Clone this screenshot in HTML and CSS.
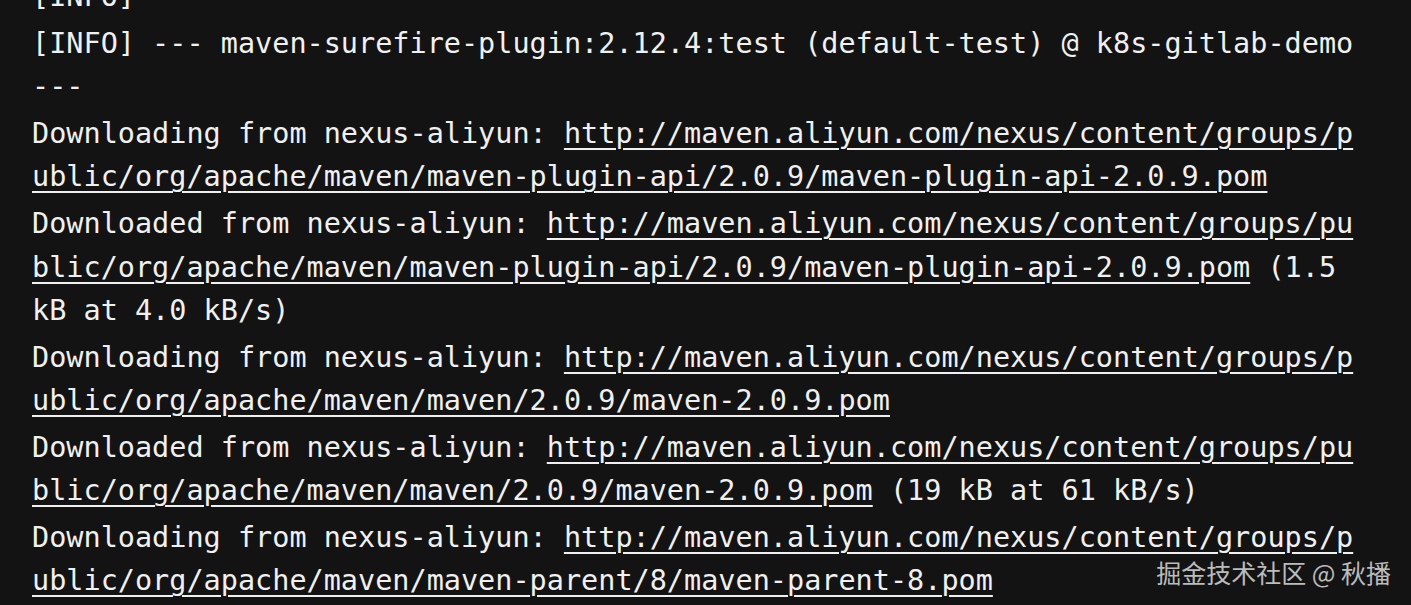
FILE: index.html
```html
<!DOCTYPE html>
<html lang="en">
<head>
<meta charset="utf-8">
<title>maven log</title>
<link rel="stylesheet" href="styles.css">
</head>
<body>
<main class="terminal">
  <div class="log">
    <p class="line">[INFO]</p>
    <p class="line">[INFO] --- maven-surefire-plugin:2.12.4:test (default-test) @ k8s-gitlab-demo ---</p>
    <p class="line">Downloading from nexus-aliyun: <a class="url" href="#">http://maven.aliyun.com/nexus/content/groups/public/org/apache/maven/maven-plugin-api/2.0.9/maven-plugin-api-2.0.9.pom</a></p>
    <p class="line">Downloaded from nexus-aliyun: <a class="url" href="#">http://maven.aliyun.com/nexus/content/groups/public/org/apache/maven/maven-plugin-api/2.0.9/maven-plugin-api-2.0.9.pom</a> (1.5 kB at 4.0 kB/s)</p>
    <p class="line">Downloading from nexus-aliyun: <a class="url" href="#">http://maven.aliyun.com/nexus/content/groups/public/org/apache/maven/maven/2.0.9/maven-2.0.9.pom</a></p>
    <p class="line">Downloaded from nexus-aliyun: <a class="url" href="#">http://maven.aliyun.com/nexus/content/groups/public/org/apache/maven/maven/2.0.9/maven-2.0.9.pom</a> (19 kB at 61 kB/s)</p>
    <p class="line">Downloading from nexus-aliyun: <a class="url" href="#">http://maven.aliyun.com/nexus/content/groups/public/org/apache/maven/maven-parent/8/maven-parent-8.pom</a></p>
  </div>
  <div class="watermark">掘金技术社区 @ 秋播</div>
</main>
</body>
</html>
```
FILE: styles.css
```css
html, body {
  margin: 0;
  padding: 0;
  background: #131313;
  height: 100%;
  overflow: hidden;
}

.terminal {
  position: relative;
  height: 605px;
  overflow: hidden;
  background: #131313;
}

.log {
  margin-top: -25px;
  padding-left: 32px;
  font-family: "DejaVu Sans Mono", "Liberation Mono", monospace;
  font-size: 28.5px;
  line-height: 43.3px;
  color: #f0f0f0;
  width: 77.5ch;
  display: flex;
  flex-direction: column;
  gap: 3.6px;
}

.line {
  margin: 0;
  white-space: normal;
}

.url {
  color: #f0f0f0;
  word-break: break-all;
  text-decoration: underline;
  text-decoration-thickness: 2px;
  text-underline-offset: 5px;
}

.watermark {
  position: absolute;
  right: 20px;
  bottom: 18px;
  font-family: "Noto Sans CJK SC", "Noto Sans", sans-serif;
  font-size: 25px;
  line-height: 30px;
  color: rgba(255, 255, 255, 0.72);
}
```
